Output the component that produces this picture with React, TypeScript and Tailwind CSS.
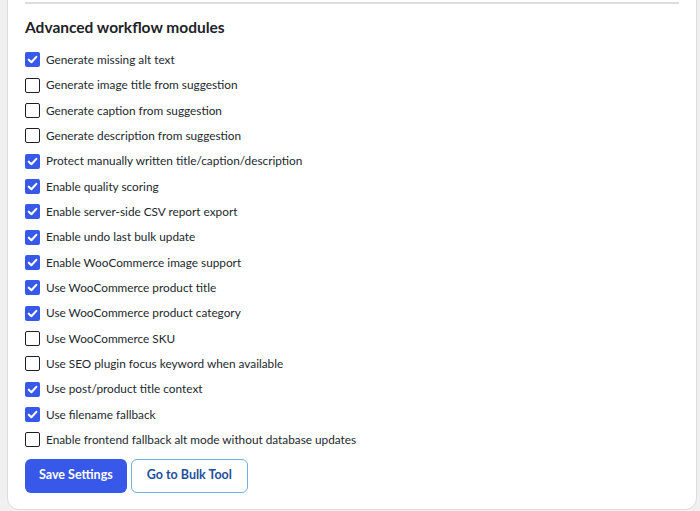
const modules = [
  { label: "Generate missing alt text", on: true },
  { label: "Generate image title from suggestion", on: false },
  { label: "Generate caption from suggestion", on: false },
  { label: "Generate description from suggestion", on: false },
  { label: "Protect manually written title/caption/description", on: true },
  { label: "Enable quality scoring", on: true },
  { label: "Enable server-side CSV report export", on: true },
  { label: "Enable undo last bulk update", on: true },
  { label: "Enable WooCommerce image support", on: true },
  { label: "Use WooCommerce product title", on: true },
  { label: "Use WooCommerce product category", on: true },
  { label: "Use WooCommerce SKU", on: false },
  { label: "Use SEO plugin focus keyword when available", on: false },
  { label: "Use post/product title context", on: true },
  { label: "Use filename fallback", on: true },
  { label: "Enable frontend fallback alt mode without database updates", on: false },
]

function Box({ on }: { on: boolean }) {
  if (on) {
    return (
      <span className="flex h-[15px] w-[15px] shrink-0 items-center justify-center rounded-[2px] bg-[#3858e9]">
        <svg width="11" height="11" viewBox="0 0 10 10">
          <path d="M1.6 5.2 L4 7.5 L8.5 2.6" fill="none" stroke="#fff" strokeWidth="1.9" strokeLinecap="round" strokeLinejoin="round" />
        </svg>
      </span>
    )
  }
  return <span className="h-[15px] w-[15px] shrink-0 rounded-[2px] border border-[#1e1e1e] bg-white" />
}

export default function App() {
  return (
    <div className="h-[511px] overflow-hidden bg-[#f0f0f1] pl-[7px] pr-[3px] font-['Lato',sans-serif]">
      <div className="-mt-[20px] rounded-b-[12px] border border-[#dcdcde] bg-white px-[17px] pb-[16px] pt-[21px]">
        <div className="h-[2px] bg-[#dcdcde]" />
        <h2 className="mt-[13px] text-[15.5px] font-bold leading-[20px] text-[#1d2327]">Advanced workflow modules</h2>
        <div className="mt-[10px] flex flex-col">
          {modules.map((m) => (
            <label key={m.label} className="flex h-[25.35px] items-center gap-[6px]">
              <Box on={m.on} />
              <span className="text-[11.8px] text-[#23282d]">{m.label}</span>
            </label>
          ))}
        </div>
        <div className="mt-[6px] flex gap-[4px]">
          <button className="h-[34px] rounded-[6px] bg-[#3858e9] px-[14px] text-[12.5px] font-bold text-white">Save Settings</button>
          <button className="h-[34px] rounded-[6px] border border-[#72aee6] bg-white px-[15px] text-[12.5px] font-bold text-[#1e4f9c]">Go to Bulk Tool</button>
        </div>
      </div>
    </div>
  )
}
